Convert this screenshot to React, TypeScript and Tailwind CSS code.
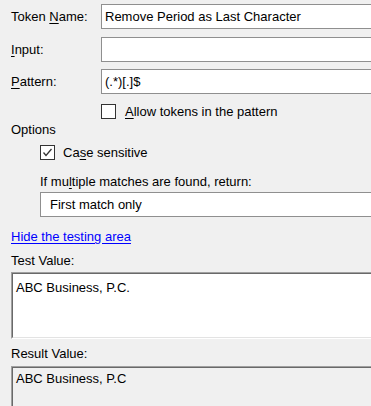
import type { ReactNode } from 'react';

function Mn({ children }: { children: ReactNode }) {
  return <span className="underline underline-offset-[2px]">{children}</span>;
}

function CheckBox({ checked }: { checked?: boolean }) {
  return (
    <div className="flex h-[15px] w-[15px] shrink-0 items-center justify-center border border-[#333333] bg-white">
      {checked ? (
        <svg width="11" height="11" viewBox="0 0 11 11">
          <polyline points="1.5,5.5 4,8.5 9.5,2" fill="none" stroke="#333333" strokeWidth="1.3" />
        </svg>
      ) : null}
    </div>
  );
}

function Field({ label, value, className }: { label: ReactNode; value?: string; className?: string }) {
  return (
    <div className={`flex h-[25px] items-center ${className ?? ''}`}>
      <div className="w-[90px] shrink-0">{label}</div>
      <div className="flex h-[25px] flex-1 items-center border border-[#8f8f8f] bg-white pl-[3px]">{value}</div>
    </div>
  );
}

function Sunken({ children, className, bg }: { children?: ReactNode; className?: string; bg: string }) {
  return (
    <div className={`border border-t-[#a0a0a0] border-l-[#a0a0a0] border-r-white border-b-white ${className ?? ''}`}>
      <div className={`h-full border border-t-[#696969] border-l-[#696969] border-r-[#e3e3e3] border-b-[#e3e3e3] ${bg}`}>{children}</div>
    </div>
  );
}

export default function App() {
  return (
    <div className="h-[406px] w-[371px] overflow-hidden bg-[#f0f0f0] text-[13px] leading-[16px] text-black [font-family:'Liberation_Sans',Arial,sans-serif]">
      <div className="w-[430px] pl-[11px] pt-[4px]">
        <Field label={<>Token <Mn>N</Mn>ame:</>} value="Remove Period as Last Character" />
        <Field className="mt-[8px]" label={<><Mn>I</Mn>nput:</>} />
        <Field className="mt-[7px]" label={<><Mn>P</Mn>attern:</>} value="(.*)[.]$" />

        <div className="mt-[10px] flex h-[15px] items-center gap-[9px] pl-[90px]">
          <CheckBox />
          <span><Mn>A</Mn>llow tokens in the pattern</span>
        </div>

        <div className="mt-[3px] h-[16px]">Options</div>

        <div className="ml-[29px] mt-[7px] flex h-[15px] items-center gap-[8px]">
          <CheckBox checked />
          <span>Ca<Mn>s</Mn>e sensitive</span>
        </div>

        <div className="ml-[29px] mt-[14px] h-[16px]">If mu<Mn>l</Mn>tiple matches are found, return:</div>
        <div className="ml-[29px] mt-[2px] flex h-[25px] items-center border border-[#8f8f8f] bg-white pl-[9px]">First match only</div>

        <div className="mt-[12px] h-[16px]">
          <a href="#" className="text-[#0000ff] underline underline-offset-[2px]">Hide the testing area</a>
        </div>

        <div className="mt-[8px] h-[16px]">Test Value:</div>
        <Sunken className="mt-[3px] h-[67px]" bg="bg-white">
          <div className="pl-[3px] pt-[6px]">ABC Business, P.C.</div>
        </Sunken>

        <div className="mt-[7px] h-[16px]">Result Value:</div>
        <Sunken className="mt-[4px] h-[60px]" bg="bg-[#f0f0f0]">
          <div className="pl-[3px] pt-[3px]">ABC Business, P.C</div>
        </Sunken>
      </div>
    </div>
  );
}
